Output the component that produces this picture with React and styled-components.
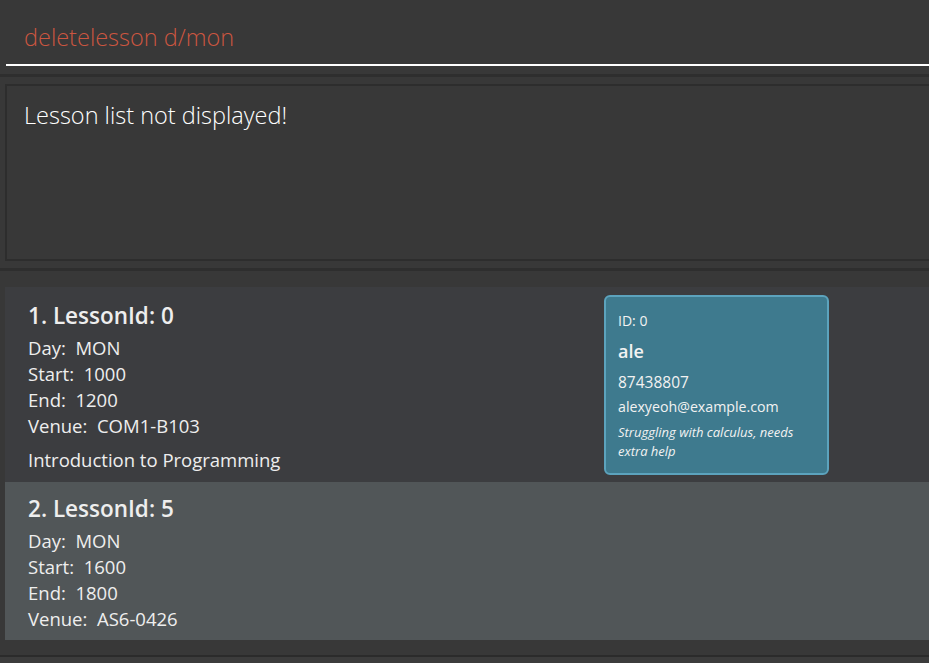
import React from "react";
import styled, { createGlobalStyle } from "styled-components";

const Global = createGlobalStyle`
  html, body {
    margin: 0;
    padding: 0;
    background: #383838;
    font-family: "Open Sans", "Noto Sans", sans-serif;
  }
  * { box-sizing: border-box; }
`;

const Page = styled.div`
  width: 929px;
  height: 663px;
  overflow: hidden;
  display: flex;
  flex-direction: column;
  background: #383838;
`;

const CommandBar = styled.div`
  height: 77px;
  padding: 0 0 0 6px;
  border-bottom: 3px solid #2e2e2e;
`;

const CommandInput = styled.div`
  height: 66px;
  padding: 21px 0 0 18px;
  border-bottom: 2px solid #ffffff;
  color: #cc5640;
  font-size: 23.5px;
  font-weight: 300;
  line-height: 32px;
`;

const ResultWrap = styled.div`
  padding: 7px 0 7px 5px;
  border-bottom: 3px solid #2e2e2e;
`;

const ResultBox = styled.div`
  height: 177px;
  border: 2px solid #2d2d2d;
  border-right: none;
  padding: 13px 0 0 17px;
  color: #ffffff;
  font-size: 23.5px;
  font-weight: 300;
  line-height: 32px;
`;

const List = styled.div`
  margin-top: 16px;
  padding-left: 5px;
  display: flex;
  flex-direction: column;
`;

const Card = styled.div`
  background: ${({ odd }) => (odd ? "#515658" : "#3c3d40")};
  display: grid;
  grid-template-columns: 576px 225px;
  padding: ${({ odd }) => (odd ? "13px 0 8px 23px" : "15px 0 7px 23px")};
  color: #eeeeee;
`;

const Info = styled.div`
  display: flex;
  flex-direction: column;
`;

const Title = styled.div`
  font-size: 22.5px;
  font-weight: 600;
  line-height: 28px;
  margin-bottom: 5px;
`;

const Field = styled.div`
  font-size: 18.5px;
  line-height: 26px;
`;

const Description = styled.div`
  font-size: 18.5px;
  line-height: 26px;
  margin-top: 8px;
`;

const StudentCard = styled.div`
  align-self: start;
  margin-top: -7px;
  height: 180px;
  background: #3e7a8e;
  border: 2px solid #5ca3bd;
  border-radius: 6px;
  padding: 14px 8px 0 12px;
  color: #f2f2f2;
`;

const StudentId = styled.div`
  font-size: 14px;
  line-height: 20px;
`;

const StudentName = styled.div`
  font-size: 18px;
  font-weight: 600;
  line-height: 26px;
  margin-top: 7px;
`;

const StudentPhone = styled.div`
  font-size: 15.5px;
  line-height: 22px;
  margin-top: 7px;
`;

const StudentEmail = styled.div`
  font-size: 14.2px;
  line-height: 22px;
  margin-top: 3px;
`;

const StudentNote = styled.div`
  font-size: 13px;
  font-style: italic;
  line-height: 19px;
  margin-top: 5px;
`;

const Footer = styled.div`
  margin-top: 15px;
  border-top: 2px solid #2b2b2b;
  flex: 1;
  background: #3c3c3c;
`;

const lessons = [
  {
    id: 0,
    day: "MON",
    start: "1000",
    end: "1200",
    venue: "COM1-B103",
    description: "Introduction to Programming",
    students: [
      {
        id: 0,
        name: "ale",
        phone: "87438807",
        email: "alexyeoh@example.com",
        note: "Struggling with calculus, needs extra help",
      },
    ],
  },
  {
    id: 5,
    day: "MON",
    start: "1600",
    end: "1800",
    venue: "AS6-0426",
    students: [],
  },
];

export default function App() {
  return (
    <Page>
      <Global />
      <CommandBar>
        <CommandInput>deletelesson d/mon</CommandInput>
      </CommandBar>
      <ResultWrap>
        <ResultBox>Lesson list not displayed!</ResultBox>
      </ResultWrap>
      <List>
        {lessons.map((l, i) => (
          <Card key={l.id} odd={i % 2 === 1}>
            <Info>
              <Title>
                {i + 1}. LessonId: {l.id}
              </Title>
              <Field>Day:&nbsp; {l.day}</Field>
              <Field>Start:&nbsp; {l.start}</Field>
              <Field>End:&nbsp; {l.end}</Field>
              <Field>Venue:&nbsp; {l.venue}</Field>
              {l.description && <Description>{l.description}</Description>}
            </Info>
            {l.students.map((s) => (
              <StudentCard key={s.id}>
                <StudentId>ID: {s.id}</StudentId>
                <StudentName>{s.name}</StudentName>
                <StudentPhone>{s.phone}</StudentPhone>
                <StudentEmail>{s.email}</StudentEmail>
                <StudentNote>{s.note}</StudentNote>
              </StudentCard>
            ))}
          </Card>
        ))}
      </List>
      <Footer />
    </Page>
  );
}
